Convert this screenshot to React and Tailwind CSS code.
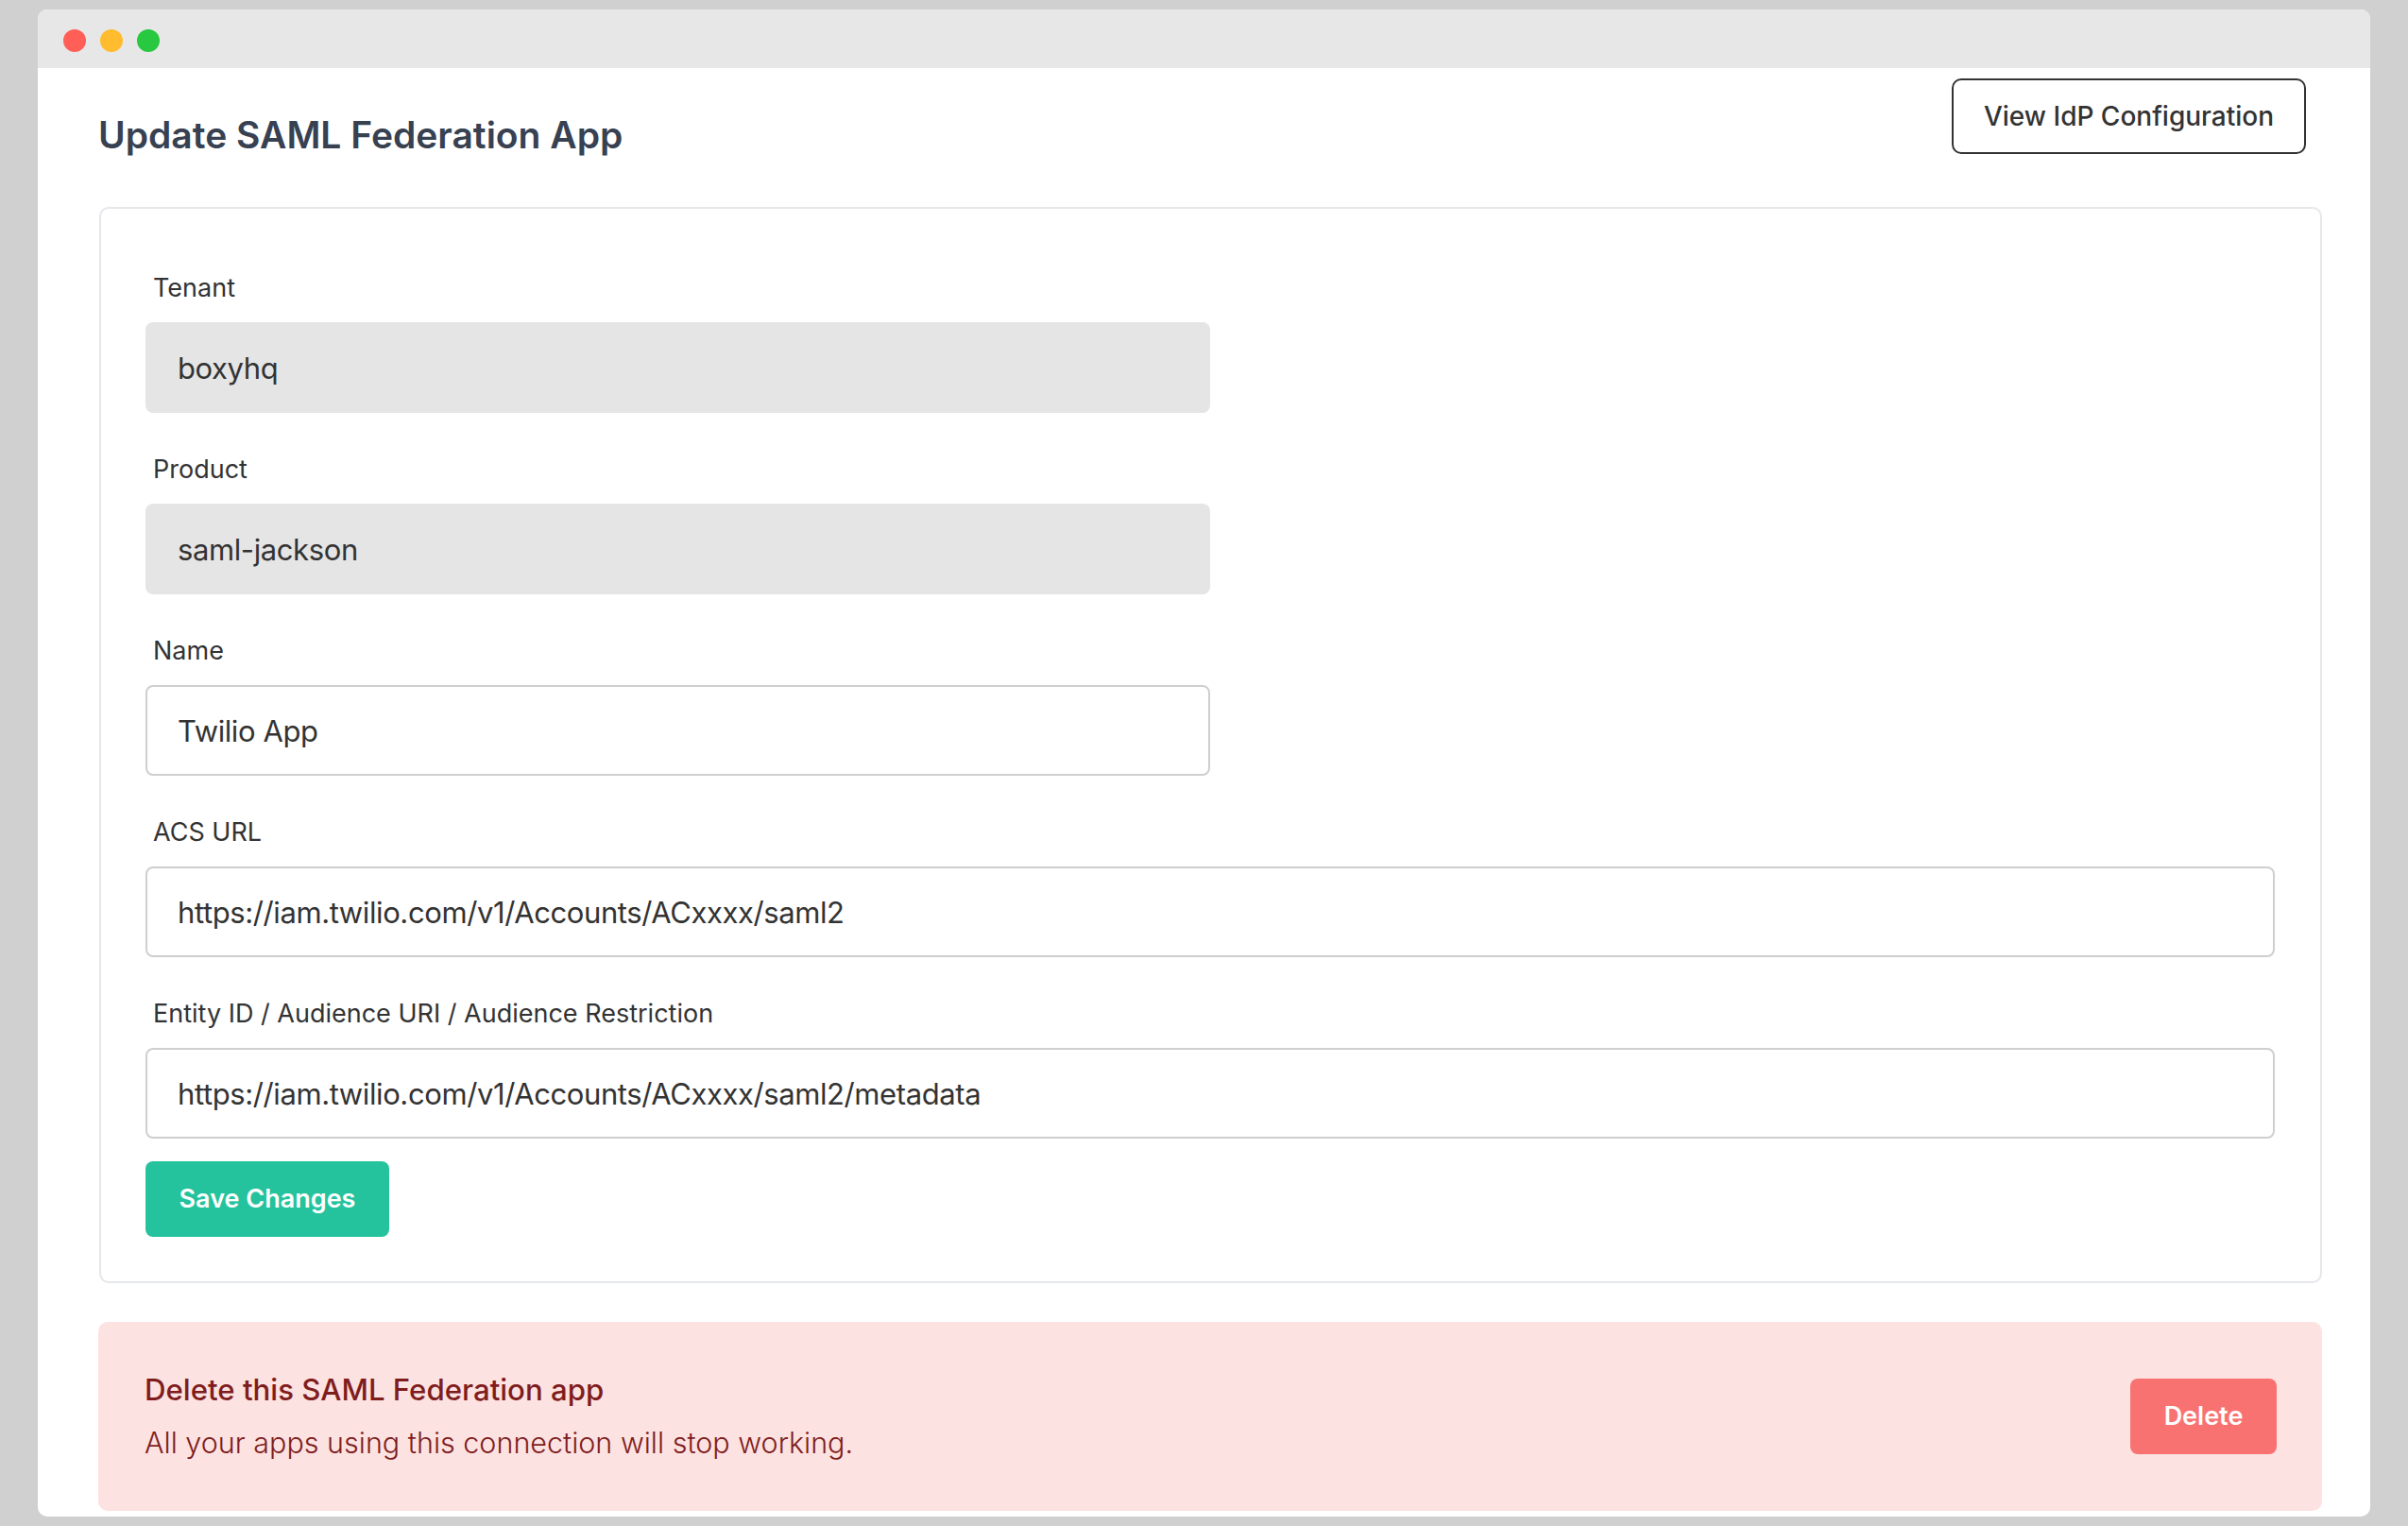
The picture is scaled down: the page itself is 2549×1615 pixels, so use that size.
import React from 'react';

const font = "[font-family:Inter,'Noto_Sans',sans-serif]";

const Field = ({ label, value, disabled, wide }) => (
  <div className={wide ? 'w-full' : 'w-[1127px]'}>
    <label className="block h-10 mb-4 pl-2 text-[27px] leading-10 text-[#333333]">{label}</label>
    <input
      type="text"
      defaultValue={value}
      disabled={disabled}
      className={`block w-full h-24 px-[32px] rounded-lg border-[2px] text-[31px] tracking-[-0.4px] text-[#333333] outline-none ${
        disabled ? 'bg-[#e5e5e5] border-transparent' : 'bg-white border-[#cfcfcf]'
      }`}
    />
  </div>
);

export default function App() {
  return (
    <div className={`${font} h-screen overflow-hidden bg-[#d0d0d0] px-10 py-[10px]`}>
      <div className="flex h-full flex-col overflow-hidden rounded-[10px] bg-white">
        <div className="flex h-[62px] shrink-0 items-center gap-[15px] bg-[#e7e7e7] pl-[27px] pt-1">
          <span className="size-6 rounded-full bg-[#ff5f57]" />
          <span className="size-6 rounded-full bg-[#febc2e]" />
          <span className="size-6 rounded-full bg-[#28c840]" />
        </div>

        <div className="pl-[65px] pr-[51px]">
          <div className="flex items-start justify-between pr-[17px] pt-[11px]">
            <h1 className="-ml-px mt-10 text-[39px] font-semibold leading-10 text-[#374151]">
              Update SAML Federation App
            </h1>
            <button className="h-20 w-[375px] rounded-[10px] border-[2px] border-[#333333] bg-white text-[28px] font-medium text-[#333333]">
              View IdP Configuration
            </button>
          </div>

          <div className="mt-14 rounded-[10px] border-[2px] border-[#e5e7eb] pb-[47px] pl-[47px] pr-12 pt-16">
            <div className="flex flex-col gap-10">
              <Field label="Tenant" value="boxyhq" disabled />
              <Field label="Product" value="saml-jackson" disabled />
              <Field label="Name" value="Twilio App" />
              <Field label="ACS URL" value="https://iam.twilio.com/v1/Accounts/ACxxxx/saml2" wide />
              <Field label="Entity ID / Audience URI / Audience Restriction" value="https://iam.twilio.com/v1/Accounts/ACxxxx/saml2/metadata" wide />
            </div>
            <button className="mt-6 h-20 w-[258px] rounded-lg bg-[#24c39d] text-[27px] font-semibold text-white">
              Save Changes
            </button>
          </div>

          <div className="-ml-px mt-[41px] flex h-[200px] items-center justify-between rounded-[10px] bg-[#fde2e2] pl-[49px] pr-[48px]">
            <div>
              <h2 className="text-[31.2px] font-medium leading-[48px] text-[#7f1d1d]">Delete this SAML Federation app</h2>
              <p className="mt-2 text-[30.5px] font-light leading-[48px] text-[#7f1d1d]">All your apps using this connection will stop working.</p>
            </div>
            <button className="h-20 w-[155px] rounded-lg bg-[#f87272] text-[27px] font-semibold text-white">
              Delete
            </button>
          </div>
        </div>
      </div>
    </div>
  );
}
